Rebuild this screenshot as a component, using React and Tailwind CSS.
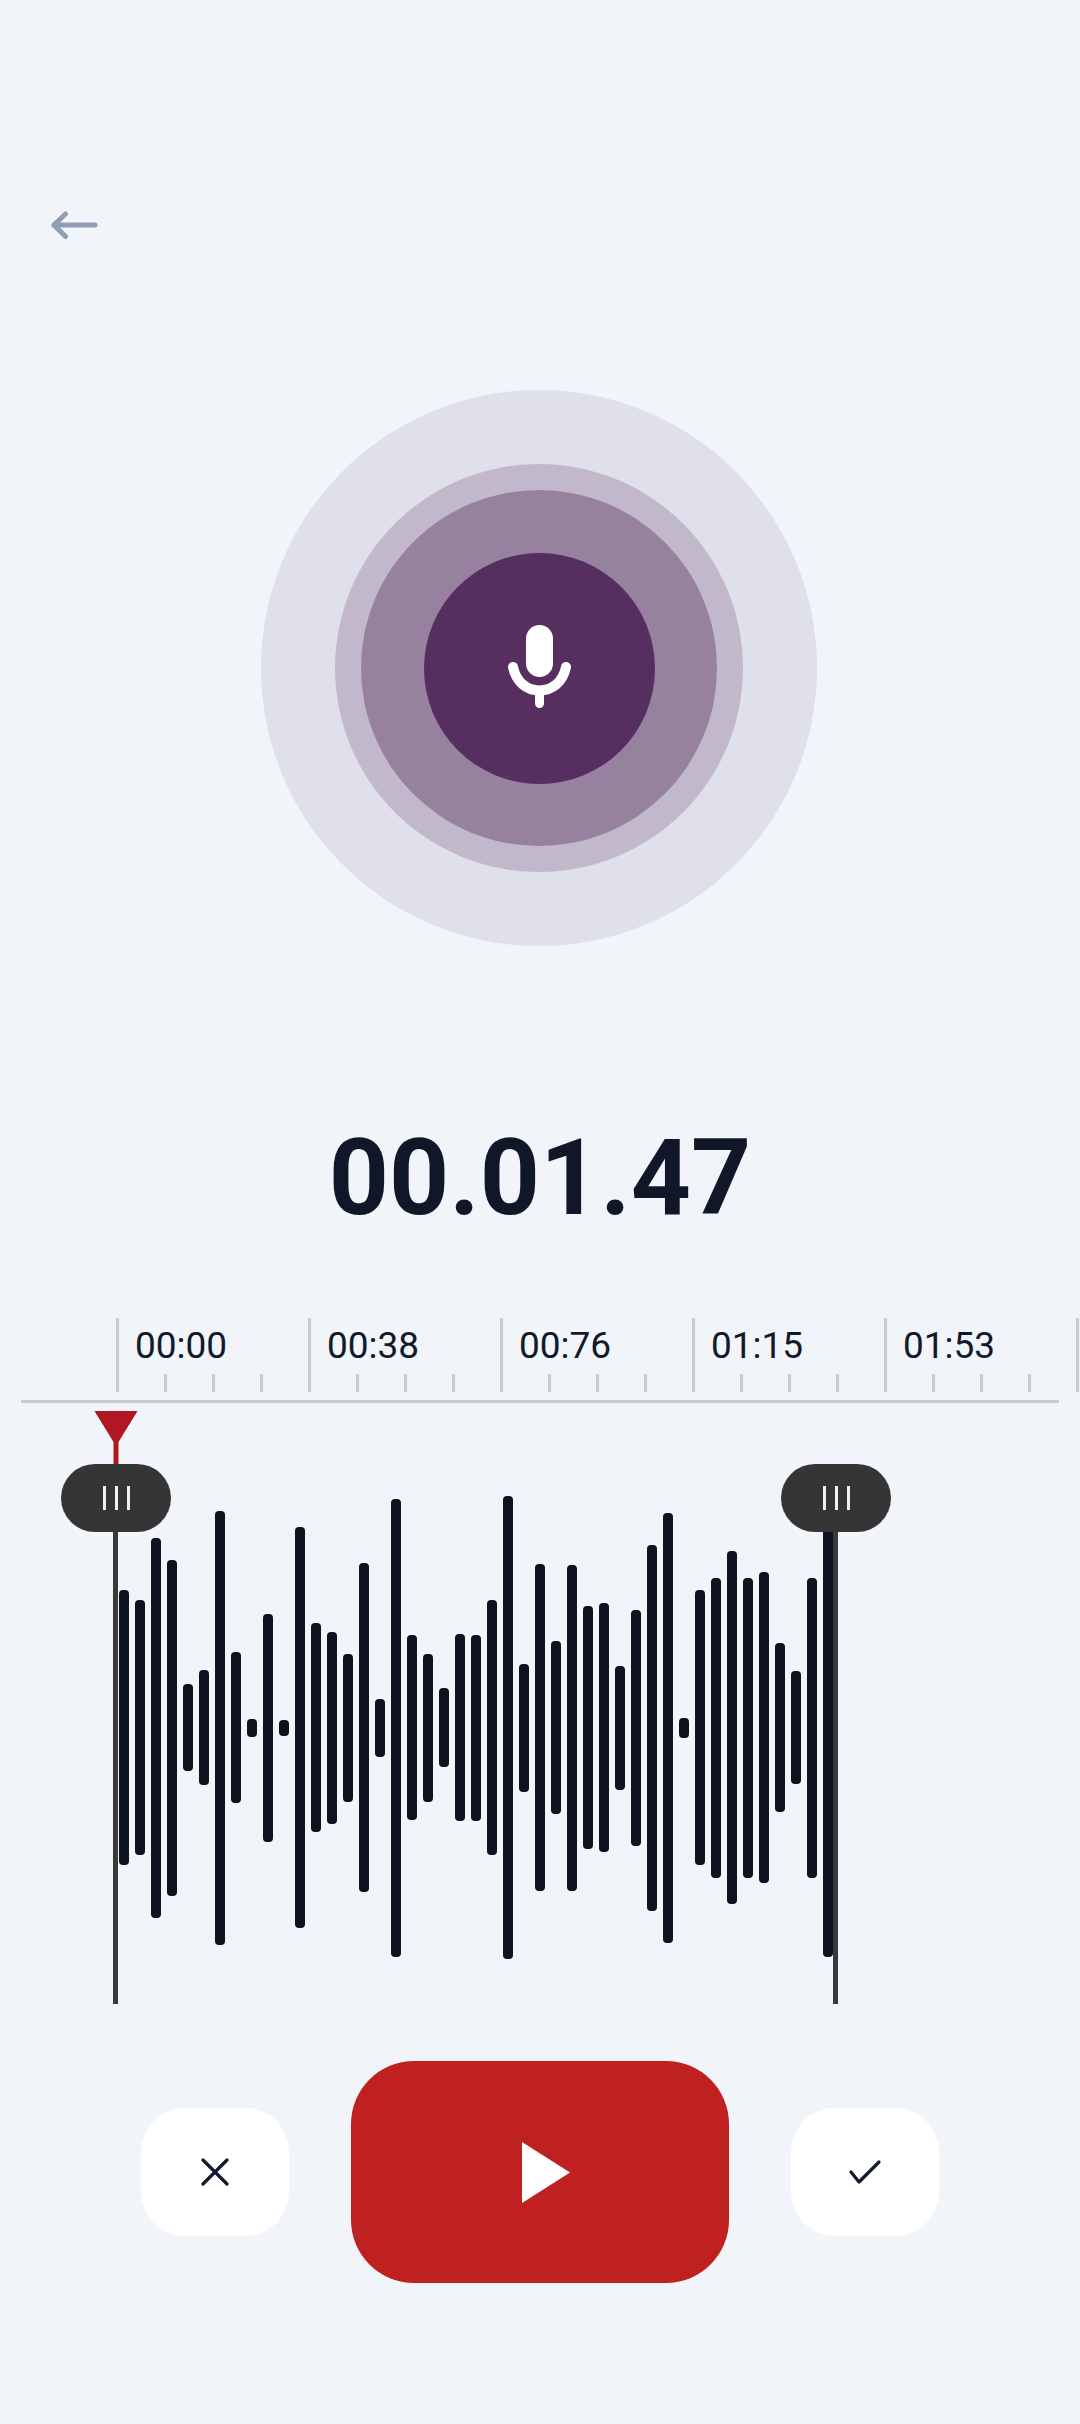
import React from 'react';

const BAR_HEIGHTS = [
  275, 255, 380, 336, 87, 115, 434, 151, 18, 228, 16, 401, 209, 192, 148,
  329, 58, 458, 185, 148, 79, 187, 186, 255, 463, 128, 327, 173, 326, 243,
  249, 124, 236, 366, 430, 20, 275, 300, 353, 300, 311, 169, 113, 300, 458,
];

const LABELS = ['00:00', '00:38', '00:76', '01:15', '01:53', ''];

const Handle = ({ className }) => (
  <div className={`absolute top-[53px] flex h-[68px] w-[110px] items-center justify-center gap-[9px] rounded-[34px] bg-[#353535] ${className}`}>
    <span className="h-[24px] w-[3px] bg-[#f2f2f2]"></span>
    <span className="h-[24px] w-[3px] bg-[#f2f2f2]"></span>
    <span className="h-[24px] w-[3px] bg-[#f2f2f2]"></span>
  </div>
);

const RulerSegment = ({ label }) => (
  <div className="relative h-[74px] w-[192px] shrink-0 border-l-[3px] border-[#c9cbd0]">
    {label && (
      <>
        <div className="pl-[16px] pt-[7px] text-[37px] leading-[42px] text-[#111a2b]">{label}</div>
        <div className="absolute bottom-0 left-[45px] flex gap-[45px]">
          <span className="h-[18px] w-[3px] bg-[#c9cbd0]"></span>
          <span className="h-[18px] w-[3px] bg-[#c9cbd0]"></span>
          <span className="h-[18px] w-[3px] bg-[#c9cbd0]"></span>
        </div>
      </>
    )}
  </div>
);

const App = () => {
  return (
    <div className="flex h-[2424px] w-[1080px] flex-col overflow-hidden bg-[#f1f4f9] font-[Roboto,sans-serif]">
      {/* Back arrow */}
      <div className="pl-[50px] pt-[210px]">
        <svg width="50" height="30" viewBox="0 0 50 30" fill="none" stroke="#919eb5" strokeWidth="5" strokeLinecap="round" strokeLinejoin="round">
          <path d="M4 15H45" />
          <path d="M15.5 4L4 15L15.5 26.5" />
        </svg>
      </div>

      {/* Mic rings */}
      <div className="ml-[261px] mt-[150px] flex h-[556px] w-[556px] items-center justify-center rounded-full bg-[#e0e0ea]">
        <div className="flex h-[408px] w-[408px] items-center justify-center rounded-full bg-[#c2b8cc]">
          <div className="flex h-[356px] w-[356px] items-center justify-center rounded-full bg-[#96829f]">
            <div className="flex h-[231px] w-[231px] items-center justify-center rounded-full bg-[#562f60]">
              <svg width="70" height="90" viewBox="504 623 70 90" fill="none">
                <rect x="526" y="625" width="27" height="52" rx="13.5" fill="#fff" />
                <path d="M513 667C516 682 527 690.5 539.5 690.5C552 690.5 563 682 566 667" stroke="#fff" strokeWidth="10" strokeLinecap="round" />
                <path d="M539.5 691V703.5" stroke="#fff" strokeWidth="9" strokeLinecap="round" />
              </svg>
            </div>
          </div>
        </div>
      </div>

      {/* Timer */}
      <div className="mt-[171px] text-center text-[105px] font-bold leading-[124px] text-[#0f1729]">00.01.47</div>

      {/* Ruler */}
      <div className="flex pl-[116px] pt-[77px]">
        {LABELS.map((label, i) => (
          <RulerSegment key={i} label={label} />
        ))}
      </div>
      <div className="ml-[21px] mt-[8px] h-[3px] w-[1038px] bg-[#c9cbd0]"></div>

      {/* Waveform with trim handles */}
      <div className="relative mt-[8px] h-[593px] pt-[85px]">
        <svg className="absolute left-[94px] top-0" width="44" height="53" viewBox="0 0 44 53">
          <path d="M0.5 0H43.5L24.5 31V53H19.5V31Z" fill="#b01722" />
        </svg>
        <div className="absolute bottom-0 left-[113px] top-[121px] w-[5px] bg-[#3a3a3a]"></div>
        <div className="absolute bottom-0 left-[833px] top-[121px] w-[5px] bg-[#3a3a3a]"></div>
        <div className="flex h-[463px] items-center gap-[6px] pl-[119px]">
          {BAR_HEIGHTS.map((h, i) => (
            <div key={i} className="w-[10px] rounded-[4px] bg-[#0d1320]" style={{ height: h }}></div>
          ))}
        </div>
        <Handle className="left-[61px]" />
        <Handle className="left-[781px]" />
      </div>

      {/* Controls */}
      <div className="mt-[57px] flex items-center justify-center gap-[62px]">
        <button className="flex h-[128px] w-[148px] items-center justify-center rounded-[44px] bg-white">
          <svg width="30" height="30" viewBox="0 0 30 30" fill="none" stroke="#111a2b" strokeWidth="3.2" strokeLinecap="round">
            <path d="M3 3L27 27M27 3L3 27" />
          </svg>
        </button>
        <button className="flex h-[222px] w-[378px] items-center justify-center rounded-[63px] bg-[#bf2121]">
          <svg className="ml-[12px]" width="48" height="61" viewBox="0 0 48 61">
            <path d="M0 0L48 30.5L0 61Z" fill="#fff" />
          </svg>
        </button>
        <button className="flex h-[128px] w-[148px] items-center justify-center rounded-[44px] bg-white">
          <svg width="34" height="26" viewBox="0 0 34 26" fill="none" stroke="#111a2b" strokeWidth="3.2" strokeLinecap="round" strokeLinejoin="round">
            <path d="M3 13L11 23L31 3" />
          </svg>
        </button>
      </div>
    </div>
  );
};

export default App;
